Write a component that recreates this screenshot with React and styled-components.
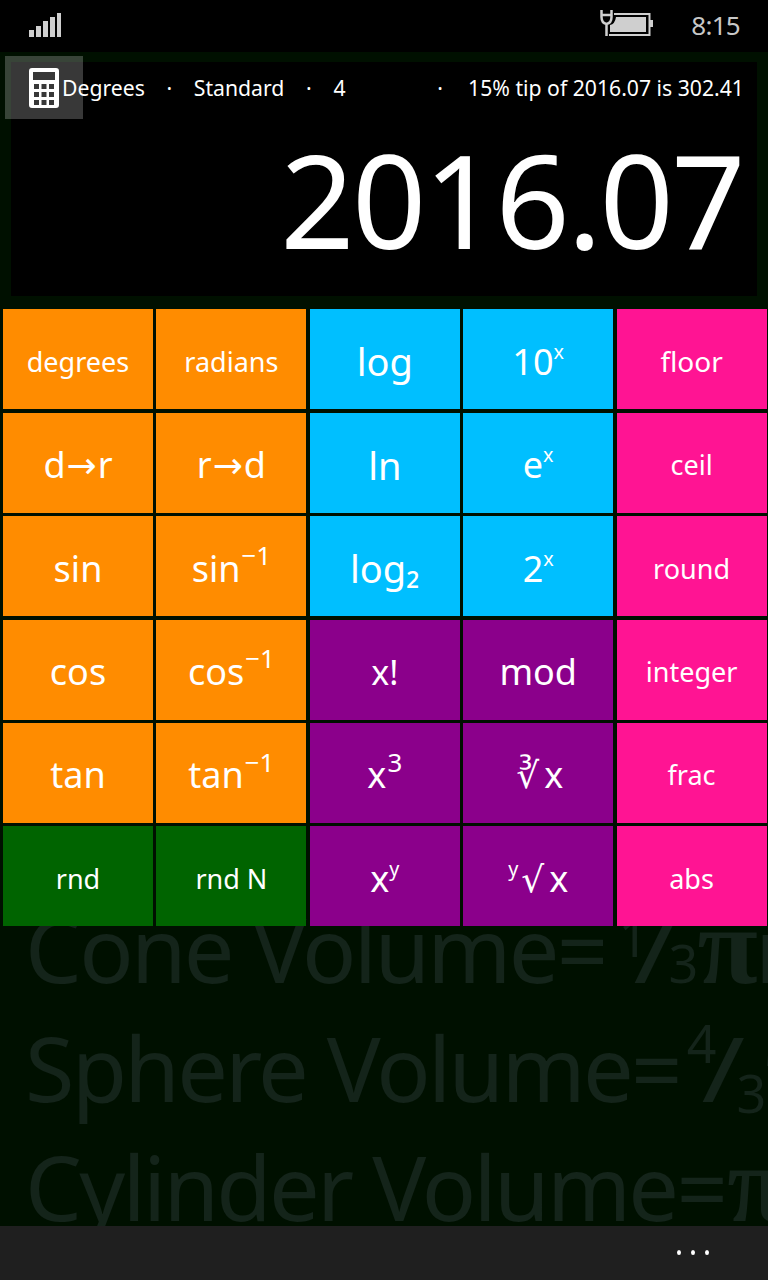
import React from "react";
import styled, { createGlobalStyle } from "styled-components";

const GlobalStyle = createGlobalStyle`
  html, body {
    margin: 0;
    padding: 0;
    background: #000;
  }
  body {
    font-family: "Noto Sans", "Open Sans", sans-serif;
  }
`;

const ORANGE = "#ff8c00";
const BLUE = "#00bfff";
const PINK = "#ff1493";
const PURPLE = "#8b008b";
const GREEN = "#006400";

const Sup = styled.span`
  font-size: ${(p) => (p.$big ? "0.72em" : "0.55em")};
  line-height: 0;
  position: relative;
  top: ${(p) => (p.$big ? "-0.65em" : "-0.8em")};
  margin-left: ${(p) => (p.$big ? "1px" : "0")};
`;

const Arrow = styled.span`
  font-family: "DejaVu Sans", sans-serif;
  margin: 0 1px;
`;

const Radical = styled.span`
  font-family: "DejaVu Sans", sans-serif;
  margin: 0 5px 0 3px;
`;

const keys = [
  { label: "degrees", color: ORANGE, size: 27 },
  { label: "radians", color: ORANGE, size: 27 },
  { label: "log", color: BLUE, size: 38 },
  { label: <>10<Sup>x</Sup></>, color: BLUE, size: 36 },
  { label: "floor", color: PINK, size: 28 },

  { label: <>d<Arrow>→</Arrow>r</>, color: ORANGE, size: 36 },
  { label: <>r<Arrow>→</Arrow>d</>, color: ORANGE, size: 36 },
  { label: "ln", color: BLUE, size: 38 },
  { label: <>e<Sup>x</Sup></>, color: BLUE, size: 36 },
  { label: "ceil", color: PINK, size: 27 },

  { label: "sin", color: ORANGE, size: 36 },
  { label: <>sin<Sup $big>−1</Sup></>, color: ORANGE, size: 36 },
  { label: "log₂", color: BLUE, size: 38 },
  { label: <>2<Sup>x</Sup></>, color: BLUE, size: 36 },
  { label: "round", color: PINK, size: 27 },

  { label: "cos", color: ORANGE, size: 36 },
  { label: <>cos<Sup $big>−1</Sup></>, color: ORANGE, size: 36 },
  { label: "x!", color: PURPLE, size: 34 },
  { label: "mod", color: PURPLE, size: 36 },
  { label: "integer", color: PINK, size: 27 },

  { label: "tan", color: ORANGE, size: 36 },
  { label: <>tan<Sup $big>−1</Sup></>, color: ORANGE, size: 36 },
  { label: <>x<Sup $big>3</Sup></>, color: PURPLE, size: 36 },
  { label: <><Radical>∛</Radical>x</>, color: PURPLE, size: 36 },
  { label: "frac", color: PINK, size: 27 },

  { label: "rnd", color: GREEN, size: 27 },
  { label: "rnd N", color: GREEN, size: 27 },
  { label: <>x<Sup>y</Sup></>, color: PURPLE, size: 36 },
  { label: <><Sup>y</Sup><Radical>√</Radical>x</>, color: PURPLE, size: 36 },
  { label: "abs", color: PINK, size: 27 },
];

function SignalIcon() {
  return (
    <svg width="34" height="28" viewBox="0 0 34 28" fill="#cfcfcf">
      <rect x="1" y="18" width="5" height="7" />
      <rect x="8" y="14" width="5" height="11" />
      <rect x="15" y="9" width="5" height="16" />
      <rect x="22" y="5" width="5" height="20" />
      <rect x="29" y="1" width="4" height="24" />
    </svg>
  );
}

function BatteryIcon() {
  return (
    <svg width="54" height="28" viewBox="0 0 54 28">
      <path
        d="M2.500 0v7q0 6 5 7q5-1 5-7V0M2.500 5h10M7.500 14v12"
        fill="none"
        stroke="#cfcfcf"
        strokeWidth="2.500"
      />
      <path d="M15 4h35.500v21H10" fill="none" stroke="#cfcfcf" strokeWidth="2" />
      <rect x="51" y="10" width="3" height="7" fill="#cfcfcf" />
      <path d="M17 7h30v15H11v-7q5-1 6-8z" fill="#cfcfcf" />
    </svg>
  );
}

function CalculatorIcon() {
  return (
    <svg width="30" height="40" viewBox="0 0 30 40">
      <path
        fillRule="evenodd"
        fill="#fff"
        d="M3 0h24a3 3 0 0 1 3 3v34a3 3 0 0 1-3 3H3a3 3 0 0 1-3-3V3a3 3 0 0 1 3-3zM4 4v8h22V4zM5 16v5h5v-5zM12.500 16v5h5v-5zM20 16v5h5v-5zM5 24v5h5v-5zM12.500 24v5h5v-5zM20 24v5h5v-5zM5 32v5h5v-5zM12.500 32v5h5v-5zM20 32v5h5v-5z"
      />
    </svg>
  );
}

export default function App() {
  return (
    <>
      <GlobalStyle />
      <Page>
        <StatusBar>
          <SignalIcon />
          <StatusRight>
            <BatteryIcon />
            <Clock>8:15</Clock>
          </StatusRight>
        </StatusBar>

        <Main>
          <Watermark aria-hidden="true">
            <WatermarkLine>
              Cone Volume=<Numer $top={-26} $left={13}>1</Numer><Slash>/</Slash><Denom $top={0}>3</Denom><Pi>π</Pi>r
            </WatermarkLine>
            <WatermarkLine>
              Sphere Volume=<Numer $top={-39} $left={7}>4</Numer><Slash>/</Slash><Denom $top={11}>3</Denom><Pi>π</Pi>r
            </WatermarkLine>
            <WatermarkLine>
              Cylinder Volume=<Pi>π</Pi>r
            </WatermarkLine>
          </Watermark>

          <HomeTile>
            <CalculatorIcon />
          </HomeTile>

          <Display>
            <InfoRow>
              <span>Degrees</span>
              <Dot>·</Dot>
              <span>Standard</span>
              <Dot>·</Dot>
              <Precision>4</Precision>
              <Dot>·</Dot>
              <Tip>15% tip of 2016.07 is 302.41</Tip>
            </InfoRow>
            <Value>2016.07</Value>
          </Display>

          <Keypad>
            {keys.map((key, index) => (
              <Key key={index} $color={key.color} $size={key.size}>
                <span>{key.label}</span>
              </Key>
            ))}
          </Keypad>
        </Main>

        <AppBar>
          <MoreDots>
            <i />
            <i />
            <i />
          </MoreDots>
        </AppBar>
      </Page>
    </>
  );
}

const Page = styled.div`
  width: 768px;
  height: 1280px;
  display: flex;
  flex-direction: column;
  overflow: hidden;
  color: #fff;
`;

const StatusBar = styled.div`
  height: 52px;
  flex: none;
  background: #000;
  display: flex;
  align-items: flex-start;
  justify-content: space-between;
  padding: 12px 28px 0 28px;
  box-sizing: border-box;
`;

const StatusRight = styled.div`
  display: flex;
  align-items: flex-start;
  gap: 38px;
  & > svg {
    margin-top: -2px;
  }
`;

const Clock = styled.div`
  font-size: 26px;
  letter-spacing: -0.7px;
  line-height: 27px;
  color: #c8c8c8;
`;

const Main = styled.div`
  flex: 1;
  position: relative;
  background: #001000;
  padding: 10px 1px 0 3px;
  overflow: hidden;
`;

const Watermark = styled.div`
  position: absolute;
  left: 25px;
  top: 837px;
  white-space: nowrap;
  font-size: 90px;
  letter-spacing: -2.7px;
  line-height: 119px;
  color: #14241a;
`;

const WatermarkLine = styled.div`
  height: 119px;
`;

const Numer = styled.span`
  font-size: 52px;
  line-height: 0;
  position: relative;
  top: ${(p) => p.$top}px;
  margin: 0 -12px 0 ${(p) => p.$left}px;
`;

const Slash = styled.span`
  display: inline-block;
  font-size: 90px;
  line-height: 0;
  margin: 0 4px;
  transform: scaleX(1.3);
`;

const Denom = styled.span`
  font-size: 52px;
  line-height: 0;
  position: relative;
  top: ${(p) => p.$top}px;
  margin-left: -4px;
`;

const Pi = styled.span`
  font-family: "Liberation Serif", serif;
  font-weight: 700;
  font-size: 110px;
  line-height: 0;
  margin-left: 2px;
`;

const HomeTile = styled.div`
  position: absolute;
  left: 5px;
  top: 4px;
  width: 78px;
  height: 63px;
  background: rgba(255, 255, 255, 0.22);
  display: flex;
  justify-content: center;
  padding: 12px 0 0 0;
  box-sizing: border-box;
  z-index: 2;
`;

const Display = styled.div`
  position: relative;
  margin: 0 10px 13.4px 8px;
  height: 234px;
  background: #000;
  box-sizing: border-box;
  padding: 10px 13px 0 51px;
  z-index: 1;
`;

const InfoRow = styled.div`
  display: flex;
  align-items: center;
  gap: 23px;
  font-size: 21.2px;
  line-height: 32px;
  white-space: nowrap;
`;

const Dot = styled.span`
  width: 3px;
  display: inline-flex;
  justify-content: center;
`;

const Precision = styled.span`
  margin-right: 70px;
`;

const Tip = styled.span`
  margin-left: auto;
`;

const Value = styled.div`
  text-align: right;
  font-size: 130px;
  letter-spacing: -2.6px;
  line-height: 150px;
  margin: 20px 1px 0 0;
`;

const Keypad = styled.div`
  position: relative;
  z-index: 1;
  display: grid;
  grid-template-columns: repeat(5, 150px);
  grid-auto-rows: 100px;
  gap: 3.4px;
`;

const Key = styled.div`
  background: ${(p) => p.$color};
  font-size: ${(p) => p.$size}px;
  display: flex;
  align-items: center;
  justify-content: center;
  white-space: nowrap;
  padding-top: 4px;
  box-sizing: border-box;
`;

const AppBar = styled.div`
  height: 54px;
  flex: none;
  background: #1f1f1f;
  display: flex;
  justify-content: flex-end;
  padding: 24px 59px 0 0;
  box-sizing: border-box;
  position: relative;
  z-index: 1;
`;

const MoreDots = styled.div`
  display: flex;
  gap: 10px;
  i {
    display: block;
    width: 4px;
    height: 5px;
    border-radius: 50%;
    background: #fff;
  }
`;
